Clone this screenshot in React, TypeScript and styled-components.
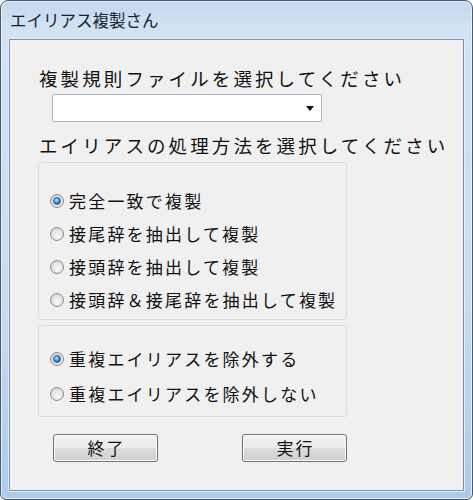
import React, { useState } from "react";
import styled, { createGlobalStyle } from "styled-components";

const GlobalStyle = createGlobalStyle`
  html, body {
    margin: 0;
    padding: 0;
    background: #ffffff;
  }
  body {
    font-family: "Noto Sans CJK JP", "Noto Sans", sans-serif;
  }
`;

const Window = styled.div`
  box-sizing: border-box;
  width: 473px;
  height: 500px;
  border: 1px solid #4b5a6b;
  border-radius: 8px 8px 6px 6px;
  background: linear-gradient(to bottom, #c4d9ef 0%, #d3e3f4 30px, #c7dcf1 60%, #abcbed 100%);
  box-shadow: inset 0 0 0 1px #e6f0fa;
  padding: 0 8px 8px 8px;
  display: flex;
  flex-direction: column;
`;

const TitleBar = styled.div`
  height: 37px;
  display: flex;
  align-items: center;
  padding-left: 1px;
  font-size: 16.5px;
  color: #15202e;
  padding-bottom: 1px;
`;

const Client = styled.div`
  box-sizing: border-box;
  flex: 1;
  border: 1px solid #7f93aa;
  background: #f0f0f0;
  box-shadow: 0 0 0 1px #e4eef9;
  display: flex;
  flex-direction: column;
  padding-top: 27px;
`;

const Caption = styled.div`
  font-size: 18.5px;
  line-height: 22px;
  letter-spacing: 3.1px;
  color: #111111;
  padding-left: 29px;
  white-space: nowrap;
`;

const Combo = styled.div`
  box-sizing: border-box;
  margin: 5px 0 0 42px;
  width: 270px;
  height: 28px;
  background: #ffffff;
  border: 1px solid #a9b8cc;
  border-radius: 2px;
  display: flex;
  align-items: center;
  justify-content: flex-end;
  padding-right: 7px;
  margin-bottom: 12px;
`;

const Arrow = styled.span`
  width: 0;
  height: 0;
  border-left: 4px solid transparent;
  border-right: 4px solid transparent;
  border-top: 5px solid #111111;
`;

const Group = styled.div<{ $top: number; $height: number; $pad: number }>`
  box-sizing: border-box;
  margin: ${(p) => p.$top}px 0 0 28px;
  width: 309px;
  height: ${(p) => p.$height}px;
  border: 1px solid #dcdcdc;
  border-radius: 3px;
  padding-top: ${(p) => p.$pad}px;
  display: flex;
  flex-direction: column;
`;

const Option = styled.label<{ $h: number }>`
  height: ${(p) => p.$h}px;
  display: flex;
  align-items: center;
  padding-left: 11px;
  font-size: 17px;
  letter-spacing: 2.2px;
  color: #111111;
  white-space: nowrap;
  cursor: default;
`;

const Radio = styled.span<{ $on: boolean }>`
  box-sizing: border-box;
  flex: none;
  width: 14px;
  height: 14px;
  border-radius: 50%;
  border: 1px solid #8a8c8e;
  background: radial-gradient(circle at 55% 60%, #fafafa 0%, #ececec 35%, #c4c4c4 100%);
  margin-right: 5px;
  display: flex;
  align-items: center;
  justify-content: center;

  &::after {
    content: "";
    display: ${(p) => (p.$on ? "block" : "none")};
    box-sizing: border-box;
    width: 8px;
    height: 8px;
    border-radius: 50%;
    border: 1px solid #1c5b93;
    background: radial-gradient(circle at 40% 35%, #c8ecff 0%, #3c9ee0 45%, #0f4f8c 100%);
  }
`;

const ButtonRow = styled.div`
  display: flex;
  margin: 17px 0 0 43px;
  gap: 84px;
`;

const Button = styled.button`
  box-sizing: border-box;
  width: 105px;
  height: 28px;
  border: 1px solid #707070;
  border-radius: 3px;
  background: linear-gradient(to bottom, #f2f2f2 0%, #ebebeb 50%, #dddddd 51%, #cfcfcf 100%);
  box-shadow: inset 0 0 0 1px #fcfcfc;
  font-family: "Noto Sans CJK JP", "Noto Sans", sans-serif;
  font-size: 17px;
  letter-spacing: 2px;
  color: #111111;
  padding: 0 0 0 2px;
  line-height: 24px;
`;

const methods = [
  "完全一致で複製",
  "接尾辞を抽出して複製",
  "接頭辞を抽出して複製",
  "接頭辞＆接尾辞を抽出して複製",
];

const dupes = ["重複エイリアスを除外する", "重複エイリアスを除外しない"];

export default function App() {
  const [method, setMethod] = useState(0);
  const [dupe, setDupe] = useState(0);

  return (
    <>
      <GlobalStyle />
      <Window>
        <TitleBar>エイリアス複製さん</TitleBar>
        <Client>
          <Caption>複製規則ファイルを選択してください</Caption>
          <Combo>
            <Arrow />
          </Combo>
          <Caption>エイリアスの処理方法を選択してください</Caption>
          <Group $top={6} $height={158} $pad={21}>
            {methods.map((m, i) => (
              <Option key={m} $h={33} onClick={() => setMethod(i)}>
                <Radio $on={method === i} />
                {m}
              </Option>
            ))}
          </Group>
          <Group $top={5} $height={92} $pad={15}>
            {dupes.map((d, i) => (
              <Option key={d} $h={35} onClick={() => setDupe(i)}>
                <Radio $on={dupe === i} />
                {d}
              </Option>
            ))}
          </Group>
          <ButtonRow>
            <Button>終了</Button>
            <Button>実行</Button>
          </ButtonRow>
        </Client>
      </Window>
    </>
  );
}
